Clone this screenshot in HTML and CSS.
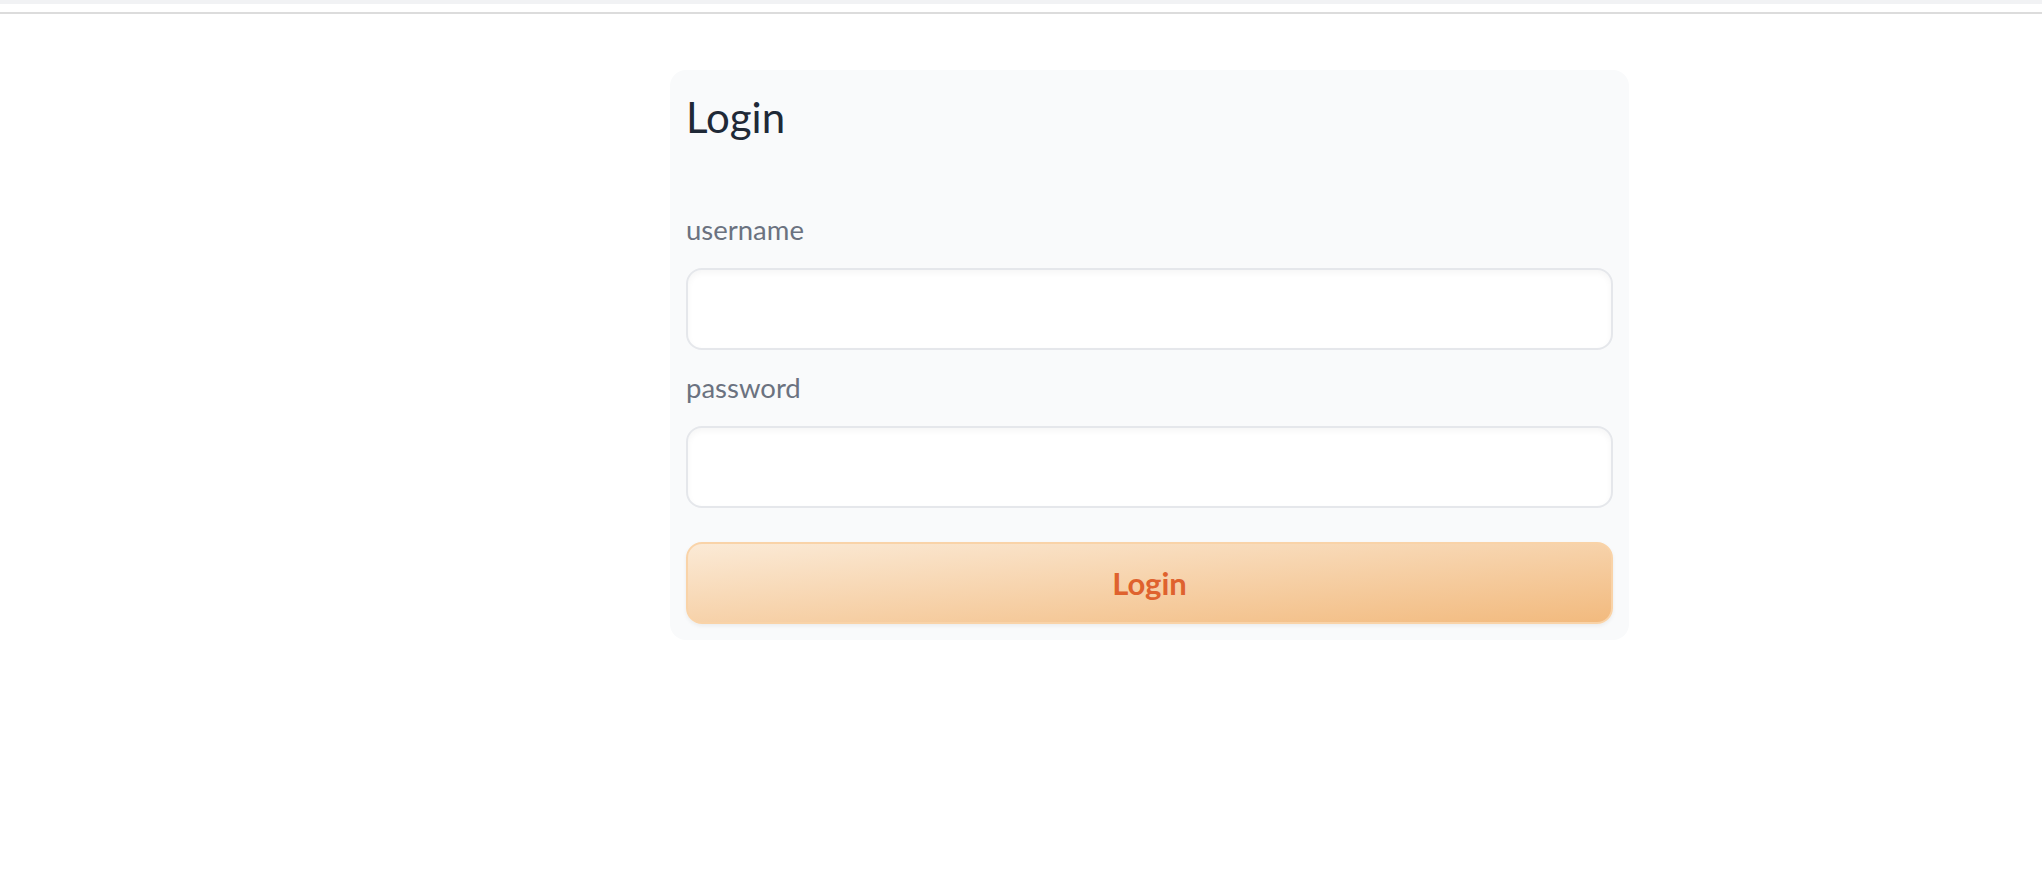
FILE: index.html
```html
<!DOCTYPE html>
<html lang="en">
<head>
    <meta charset="UTF-8">
    <meta name="viewport" content="width=device-width, initial-scale=1.0">
    <title>Login</title>
    <link rel="stylesheet" href="styles.css">
</head>
<body>

<div class="topbar"></div>

<div class="login-box">
    <h1>Login</h1>

    <div class="form-group first">
        <label for="username">username</label>
        <input type="text" id="username">
    </div>

    <div class="form-group">
        <label for="password">password</label>
        <input type="password" id="password">
    </div>

    <button class="login-btn">Login</button>
</div>

</body>
</html>
```

FILE: styles.css
```css
body {
    font-family: Lato, "Noto Sans", sans-serif;
    background-color: #fff;
    margin: 0;
}
.topbar {
    height: 8px;
    border-top: 4px solid #f1f2f4;
    border-bottom: 2px solid #dcdcdc;
}
.login-box {
    width: 959px;
    box-sizing: border-box;
    margin: 56px 0 0 670px;
    padding: 16px;
    background-color: #f9fafb;
    border-radius: 16px;
}
h1 {
    margin: 5px 0 0;
    font-size: 42px;
    line-height: 53px;
    font-weight: normal;
    color: #1f2937;
}
.form-group {
    margin-top: 20px;
}
.form-group.first {
    margin-top: 68px;
}
label {
    display: block;
    font-size: 27.5px;
    line-height: 36px;
    color: #6b7280;
    margin-bottom: 20px;
}
input[type="text"], input[type="password"] {
    display: block;
    width: 100%;
    height: 82px;
    box-sizing: border-box;
    padding: 0 20px;
    border: 2px solid #e5e7eb;
    border-radius: 16px;
    background-color: #fff;
    box-shadow: inset 0 3px 6px rgba(0, 0, 0, 0.04);
    font-size: 27px;
}
.login-btn {
    display: block;
    width: 100%;
    height: 82px;
    margin-top: 34px;
    border: 2px solid #f9d3a8;
    border-radius: 16px;
    background: linear-gradient(to bottom right, #fbead6, #f2ba7e);
    box-shadow: 0 2px 4px rgba(0, 0, 0, 0.06);
    color: #df622e;
    font-family: Lato, "Noto Sans", sans-serif;
    font-size: 31px;
    font-weight: bold;
    cursor: pointer;
}
```
